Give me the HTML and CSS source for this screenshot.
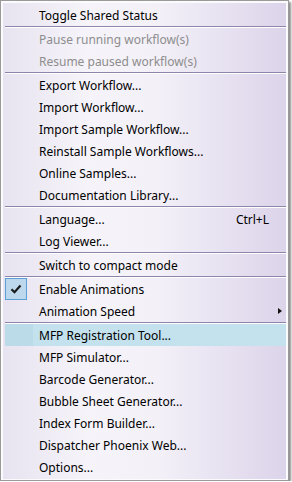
FILE: index.html
```html
<!DOCTYPE html>
<html lang="en">
<head>
    <meta charset="UTF-8">
    <title>Menu</title>
    <link rel="stylesheet" href="styles.css">
</head>
<body>
    <div class="menu">
        <div class="inner">
            <ul class="list">
                <li class="item"><span class="gutter"></span><span class="label">Toggle Shared Status</span></li>
                <li class="sep"></li>
                <li class="item disabled"><span class="gutter"></span><span class="label">Pause running workflow(s)</span></li>
                <li class="item disabled"><span class="gutter"></span><span class="label">Resume paused workflow(s)</span></li>
                <li class="sep"></li>
                <li class="item"><span class="gutter"></span><span class="label">Export Workflow...</span></li>
                <li class="item"><span class="gutter"></span><span class="label">Import Workflow...</span></li>
                <li class="item"><span class="gutter"></span><span class="label">Import Sample Workflow...</span></li>
                <li class="item"><span class="gutter"></span><span class="label">Reinstall Sample Workflows...</span></li>
                <li class="item"><span class="gutter"></span><span class="label">Online Samples...</span></li>
                <li class="item"><span class="gutter"></span><span class="label">Documentation Library...</span></li>
                <li class="sep"></li>
                <li class="item"><span class="gutter"></span><span class="label">Language...</span><span class="key">Ctrl+L</span></li>
                <li class="item"><span class="gutter"></span><span class="label">Log Viewer...</span></li>
                <li class="sep"></li>
                <li class="item"><span class="gutter"></span><span class="label">Switch to compact mode</span></li>
                <li class="sep"></li>
                <li class="item"><span class="gutter"><span class="check">
                    <svg width="12" height="10" viewBox="0 0 12 10"><path d="M1.5 5.2 L4.5 8.2 L10.5 1.5" fill="none" stroke="#1a1a1a" stroke-width="2.2"/></svg>
                </span></span><span class="label">Enable Animations</span></li>
                <li class="item"><span class="gutter"></span><span class="label">Animation Speed</span><span class="arrow"></span></li>
                <li class="sep"></li>
                <li class="item active"><span class="gutter"></span><span class="label">MFP Registration Tool...</span></li>
                <li class="item"><span class="gutter"></span><span class="label">MFP Simulator...</span></li>
                <li class="item"><span class="gutter"></span><span class="label">Barcode Generator...</span></li>
                <li class="item"><span class="gutter"></span><span class="label">Bubble Sheet Generator...</span></li>
                <li class="item"><span class="gutter"></span><span class="label">Index Form Builder...</span></li>
                <li class="item"><span class="gutter"></span><span class="label">Dispatcher Phoenix Web...</span></li>
                <li class="item"><span class="gutter"></span><span class="label">Options...</span></li>
            </ul>
        </div>
    </div>
</body>
</html>
```

FILE: styles.css
```css
body,div,ul,li{
    padding: 0;
    margin: 0;
}
body{
    background-color: #fff;
    font-family: 'Noto Sans', 'Open Sans', sans-serif;
    font-size: 12px;
    color: #000;
}
ul{
    list-style-type: none;
}
.menu{
    width: 287px;
    height: 478px;
    border: 1px solid #9a9a9a;
    background-color: #fbfbfd;
    box-shadow: 2px 2px 2px rgba(0,0,0,.45);
    padding: 2px 2px 1px 2px;
    box-sizing: content-box;
    width: 283px;
    height: 476px;
}
.inner{
    height: 100%;
    background: linear-gradient(to right, #e7e3f0 0%, #f6f4fa 30%, #f3f0f8 55%, #dcd4ea 100%);
    padding-top: 1px;
    box-sizing: border-box;
}
.list{
    margin-left: 2px;
}
.item{
    display: flex;
    align-items: center;
    height: 22px;
    white-space: nowrap;
}
.gutter{
    width: 34px;
    height: 22px;
    flex: none;
}
.label{
    flex: 1;
}
.disabled{
    color: #8d8d8d;
}
.key{
    margin-right: 17px;
}
.arrow{
    width: 0;
    height: 0;
    border-left: 4px solid #111;
    border-top: 3.5px solid transparent;
    border-bottom: 3.5px solid transparent;
    margin-right: 4px;
}
.active{
    background: linear-gradient(to right, #bcdbe8 0, #bcdbe8 28px, #c3e2ee 28px);
}
.check{
    display: flex;
    align-items: center;
    justify-content: center;
    width: 22px;
    height: 22px;
    box-sizing: border-box;
    border: 1px solid #5a9fd6;
    background-color: #bdd8ec;
}
.sep{
    height: 0;
    border-top: 1px solid #8e85aa;
    border-bottom: 1px solid #fff;
}
```
